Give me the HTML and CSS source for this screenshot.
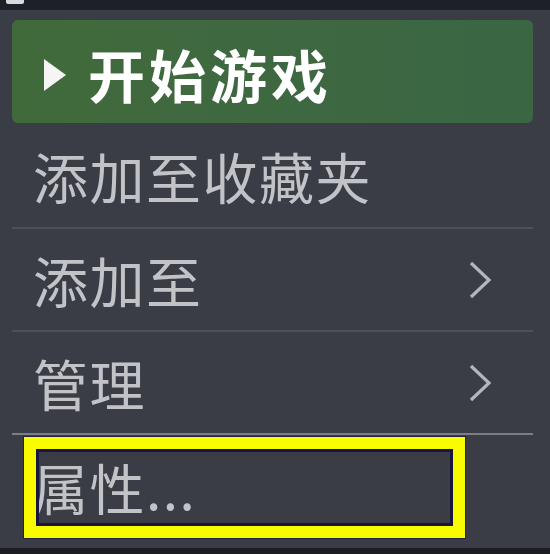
FILE: index.html
```html
<!DOCTYPE html>
<html lang="zh-CN">
<head>
<meta charset="utf-8">
<link rel="stylesheet" href="styles.css">
</head>
<body>
<div class="topbar"><span class="nub"></span></div>
<div class="menu">
  <div class="play">
    <svg class="tri" width="24" height="34" viewBox="0 0 24 34"><polygon points="1,1 23,17 1,33" fill="#f4f5f4"/></svg>
    <span class="play-label">开始游戏</span>
  </div>
  <div class="item first"><span>添加至收藏夹</span></div>
  <div class="item"><span>添加至</span>
    <svg class="chev" width="26" height="42" viewBox="0 0 26 42"><polyline points="4,4 22,21 4,38" fill="none" stroke="#b4b6ba" stroke-width="3.2"/></svg>
  </div>
  <div class="item"><span>管理</span>
    <svg class="chev" width="26" height="42" viewBox="0 0 26 42"><polyline points="4,4 22,21 4,38" fill="none" stroke="#b4b6ba" stroke-width="3.2"/></svg>
  </div>
  <div class="item last"><span>属性...</span></div>
</div>
<div class="bottombar"></div>
<div class="highlight"></div>
</body>
</html>
```
FILE: styles.css
```css
html, body {
  margin: 0;
  padding: 0;
}
body {
  width: 550px;
  height: 554px;
  overflow: hidden;
  background: #3a3d46;
  font-family: "Noto Sans CJK SC", "Noto Sans", sans-serif;
  position: relative;
}
.topbar {
  height: 10px;
  background: #1d2029;
  position: relative;
}
.nub {
  position: absolute;
  left: 6px;
  top: 0;
  width: 18px;
  height: 4px;
  background: #d8dadd;
  border-radius: 0 0 2px 2px;
}
.menu {
  padding: 10px 17px 0 12px;
  height: 538px;
  box-sizing: border-box;
}
.play {
  height: 103px;
  border-radius: 6px;
  background: linear-gradient(90deg, #416a3b 0%, #3e6840 50%, #3a6644 100%);
  display: flex;
  align-items: center;
  padding-left: 31px;
  gap: 21px;
}
.tri {
  display: block;
  margin-top: 6px;
}
.play-label {
  color: #ffffff;
  font-size: 57px;
  font-weight: 700;
  line-height: 1;
  letter-spacing: 4px;
  margin-top: 3px;
}
.item {
  display: flex;
  align-items: center;
  justify-content: space-between;
  padding: 0 40px 0 21px;
  height: 101px;
  border-top: 2px solid #4e515a;
  color: #c1c3c7;
  font-size: 55px;
  letter-spacing: 1.5px;
  line-height: 1;
}
.item.first {
  border-top: none;
  height: 104px;
}
.item.last {
  border-top-color: #7c7e82;
  height: 114px;
  padding-bottom: 10px;
  box-sizing: border-box;
}
.chev {
  display: block;
}
.bottombar {
  position: absolute;
  left: 0;
  right: 0;
  bottom: 0;
  height: 6px;
  background: #1b1d23;
}
.highlight {
  position: absolute;
  left: 24px;
  top: 437px;
  width: 441px;
  height: 101px;
  box-sizing: border-box;
  border: 12px solid #fbfb00;
  outline: 1px solid #23234a;
  box-shadow: inset 0 0 0 3px #17173c;
}
```
